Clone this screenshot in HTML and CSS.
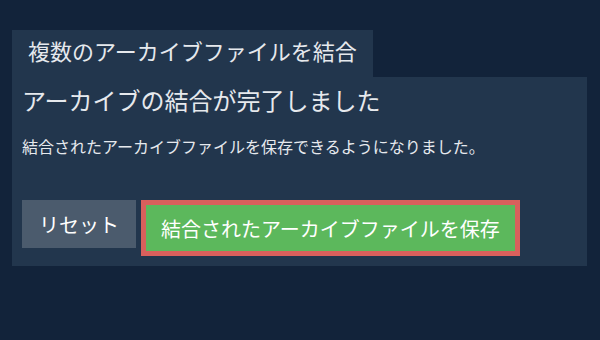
FILE: index.html
```html
<!DOCTYPE html>
<html lang="ja">
<head>
	<meta charset="UTF-8">
	<title>複数のアーカイブファイルを結合</title>
	<link rel="stylesheet" href="styles.css">
</head>
<body>
	<div class="page">
		<div class="tab">複数のアーカイブファイルを結合</div>
		<div class="panel">
			<h2 class="title">アーカイブの結合が完了しました</h2>
			<p class="desc">結合されたアーカイブファイルを保存できるようになりました。</p>
			<div class="actions">
				<button class="btn reset">リセット</button>
				<button class="btn save">結合されたアーカイブファイルを保存</button>
			</div>
		</div>
	</div>
</body>
</html>
```

FILE: styles.css
```css
body {
	margin: 0;
	background: #12233a;
	color: #e6e9ed;
	font-family: "Noto Sans CJK JP", "Noto Sans", sans-serif;
}

.page {
	width: 575px;
	padding: 30px 0 0 12px;
}

/*タブ*/
.tab {
	display: inline-block;
	height: 47px;
	padding: 0 16px;
	background: #22364d;
	font-size: 22px;
	line-height: 40px;
	box-sizing: border-box;
}

.panel {
	background: #22364d;
	padding: 6px 10px 10px;
}
.title {
	margin: 0;
	font-size: 24px;
	font-weight: normal;
	line-height: 34px;
}
.desc {
	margin: 18px 0 0;
	font-size: 16px;
	line-height: 22px;
}

/*ボタン*/
.actions {
	display: flex;
	align-items: flex-start;
	gap: 5px;
	margin-top: 43px;
}
.btn {
	font-family: inherit;
	font-size: 20px;
	color: #fff;
	border: 0;
	margin: 0;
	cursor: pointer;
}
.reset {
	height: 48px;
	padding: 0 17px;
	background: #4b5b6d;
}
.save {
	height: 56px;
	padding: 0 15px;
	background: #5cb85c;
	border: 5px solid #d9605c;
}
```
